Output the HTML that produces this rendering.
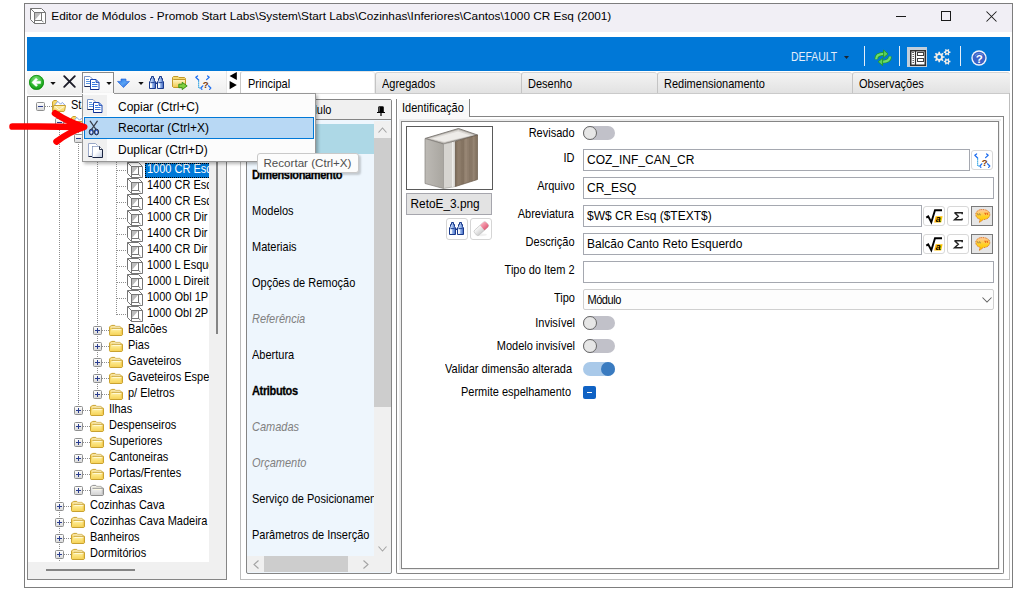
<!DOCTYPE html>
<html><head><meta charset="utf-8">
<style>
*{box-sizing:border-box;margin:0;padding:0}
html,body{width:1016px;height:592px;overflow:hidden;background:#fff;font-family:"Liberation Sans",sans-serif;font-size:11px;color:#000}
.a{position:absolute}
.t{position:absolute;white-space:pre;line-height:1}
.ms{transform:scaleY(1.1);transform-origin:0 9.31px}
svg{overflow:visible}
</style></head><body>

<div class="a" style="left:24px;top:3px;width:989px;height:585px;border:1px solid #7d7d7d;background:#fff"></div>
<div class="a" style="left:25px;top:4px;width:987px;height:28px;background:#f1eff5"></div>
<svg class="a" style="left:30px;top:8px;" width="16" height="16" viewBox="0 0 16 16"><path d="M0.5 0.5H11.5L15.5 4.5V15.5H4.5L0.5 11.5Z" fill="#fff" stroke="#767676"/><path d="M0.5 0.5L4.5 4.5H15.5M4.5 4.5V15.5" stroke="#767676" fill="none"/><rect x="4.5" y="4.5" width="7" height="8" fill="#fff" stroke="#767676"/><path d="M5 5H11L5 12Z" fill="#bcbcbc"/><path d="M11.5 12.5L13.5 14" stroke="#767676"/></svg>
<div class="t" style="left:51.3px;top:11.01px;font-size:11.8px;color:#000;font-weight:400;font-style:normal;">Editor de Módulos - Promob Start Labs\System\Start Labs\Cozinhas\Inferiores\Cantos\1000 CR Esq (2001)</div>
<div class="a" style="left:896px;top:16px;width:10px;height:1px;background:#1a1a1a"></div>
<div class="a" style="left:941px;top:11px;width:10px;height:10px;border:1px solid #1a1a1a"></div>
<svg class="a" style="left:986px;top:11px;" width="11" height="11" viewBox="0 0 11 11"><path d="M0.5 0.5L10.5 10.5M10.5 0.5L0.5 10.5" stroke="#1a1a1a" stroke-width="1.05"/></svg>
<div class="a" style="left:27px;top:37px;width:983px;height:34px;background:#0078d7"></div>
<div class="t" style="left:791px;top:50.8px;font-size:12px;color:#e6effa;transform:scaleX(0.866);transform-origin:0 0">DEFAULT</div>
<svg class="a" style="left:844px;top:56px;" width="5" height="3" viewBox="0 0 5 3"><path d="M0 0H5L2.5 3Z" fill="#1b2430"/></svg>
<div class="a" style="left:864px;top:46px;width:1px;height:20px;background:#e4eef9"></div>
<div class="a" style="left:899px;top:46px;width:1px;height:20px;background:#e4eef9"></div>
<div class="a" style="left:960px;top:46px;width:1px;height:20px;background:#e4eef9"></div>
<svg class="a" style="left:874px;top:49px;" width="18" height="17" viewBox="0 0 18 17"><g fill="none" stroke-linecap="butt">
<path d="M2.2 10.2C2.2 6.8 5 4.9 10 4.9" stroke="#249a24" stroke-width="3.6"/>
<path d="M2.2 10.2C2.2 6.8 5 4.9 10 4.9" stroke="#6fdc6f" stroke-width="2.2"/>
<path d="M16 7.6C16 11 13.2 12.8 8.2 12.8" stroke="#249a24" stroke-width="3.6"/>
<path d="M16 7.6C16 11 13.2 12.8 8.2 12.8" stroke="#6fdc6f" stroke-width="2.2"/>
</g>
<path d="M9.6 1L14 4.9L9.6 8.7Z" fill="#5cd05c" stroke="#249a24" stroke-width="0.9" stroke-linejoin="round"/>
<path d="M8.6 9.2L4.2 12.8L8.6 16.6Z" fill="#5cd05c" stroke="#249a24" stroke-width="0.9" stroke-linejoin="round"/></svg>
<div class="a" style="left:907px;top:47px;width:20px;height:20px;background:#c3cfdb"></div>
<svg class="a" style="left:910px;top:50px;" width="16" height="16" viewBox="0 0 16 16"><rect x="0.75" y="0.75" width="14.5" height="14.5" fill="#fff" stroke="#303030" stroke-width="1.5"/>
<path d="M5.5 0.75V15.25" stroke="#303030" stroke-width="1.2"/>
<rect x="7.5" y="2.5" width="6" height="3" fill="#fff" stroke="#404040"/>
<rect x="7.5" y="8.5" width="6" height="3" fill="#fff" stroke="#404040"/>
<path d="M2 2.5H4M2.5 4.5H4M2.5 6.5H4M2.5 8.5H4M2.5 10.5H4M2.5 12.5H4" stroke="#505050" stroke-width="0.9"/></svg>
<svg class="a" style="left:932px;top:49px;" width="20" height="18" viewBox="0 0 20 18"><path d="M11.00 7.13 L12.53 7.16 L12.53 8.84 L11.00 8.87 L10.51 10.07 L11.57 11.17 L10.37 12.37 L9.27 11.31 L8.07 11.80 L8.04 13.33 L6.36 13.33 L6.33 11.80 L5.13 11.31 L4.03 12.37 L2.83 11.17 L3.89 10.07 L3.40 8.87 L1.87 8.84 L1.87 7.16 L3.40 7.13 L3.89 5.93 L2.83 4.83 L4.03 3.63 L5.13 4.69 L6.33 4.20 L6.36 2.67 L8.04 2.67 L8.07 4.20 L9.27 4.69 L10.37 3.63 L11.57 4.83 L10.51 5.93ZM9.10 8.00A1.9 1.9 0 1 0 5.30 8.00A1.9 1.9 0 1 0 9.10 8.00Z" fill="#f3eee8" fill-rule="evenodd"/><path d="M17.39 2.49 L18.43 2.49 L18.43 3.91 L17.39 3.91 L16.86 4.83 L17.38 5.73 L16.15 6.43 L15.63 5.54 L14.57 5.54 L14.05 6.43 L12.82 5.73 L13.34 4.83 L12.81 3.91 L11.77 3.91 L11.77 2.49 L12.81 2.49 L13.34 1.57 L12.82 0.67 L14.05 -0.03 L14.57 0.86 L15.63 0.86 L16.15 -0.03 L17.38 0.67 L16.86 1.57ZM16.10 3.20A1.0 1.0 0 1 0 14.10 3.20A1.0 1.0 0 1 0 16.10 3.20Z" fill="#f3eee8" fill-rule="evenodd"/><path d="M17.39 11.79 L18.43 11.79 L18.43 13.21 L17.39 13.21 L16.86 14.13 L17.38 15.03 L16.15 15.73 L15.63 14.84 L14.57 14.84 L14.05 15.73 L12.82 15.03 L13.34 14.13 L12.81 13.21 L11.77 13.21 L11.77 11.79 L12.81 11.79 L13.34 10.87 L12.82 9.97 L14.05 9.27 L14.57 10.16 L15.63 10.16 L16.15 9.27 L17.38 9.97 L16.86 10.87ZM16.10 12.50A1.0 1.0 0 1 0 14.10 12.50A1.0 1.0 0 1 0 16.10 12.50Z" fill="#f3eee8" fill-rule="evenodd"/></svg>
<svg class="a" style="left:971px;top:50px;" width="17" height="17" viewBox="0 0 17 17"><circle cx="8" cy="8" r="7.7" fill="#f2f5fa"/>
<circle cx="8" cy="8" r="6.3" fill="#3a62c8"/>
<path d="M4.2 6.2A4.2 3 0 0 1 12 5" fill="none" stroke="#6a8ee0" stroke-width="1"/>
<text x="8.2" y="12.6" font-family="Liberation Sans" font-weight="700" font-size="11.5" fill="#fff" text-anchor="middle">?</text></svg>
<div class="a" style="left:27px;top:71px;width:200px;height:24px;background:linear-gradient(#fcfcfc,#eeeeee);border-bottom-left-radius:3px;border-right:1px solid #e6e6e6"></div>
<svg class="a" style="left:29px;top:75px;" width="16" height="16" viewBox="0 0 16 16"><defs><radialGradient id="gg" cx="0.45" cy="0.3" r="0.75"><stop offset="0" stop-color="#7ee07a"/><stop offset="0.6" stop-color="#2cb62c"/><stop offset="1" stop-color="#109410"/></radialGradient></defs>
<circle cx="7.5" cy="7.4" r="7.4" fill="url(#gg)"/>
<circle cx="7.5" cy="7.4" r="7" fill="none" stroke="#0c8a0c" stroke-width="0.8"/>
<path d="M2.9 7.4L7 3.3L8.6 4.6L6.9 6.2H11.6V8.6H6.9L8.6 10.2L7 11.5Z" fill="#fff" stroke="#fff" stroke-width="0.5" stroke-linejoin="round"/></svg>
<svg class="a" style="left:50px;top:82px;" width="6" height="3" viewBox="0 0 6 3"><path d="M0.3 0H5.7L3 3Z" fill="#111"/></svg>
<svg class="a" style="left:63px;top:75px;" width="13" height="13" viewBox="0 0 13 13"><path d="M1.2 1.2L11.8 11.8M11.8 1.2L1.2 11.8" stroke="#1c1c28" stroke-width="1.9" stroke-linecap="round"/></svg>
<div class="a" style="left:82px;top:72px;width:32px;height:23px;border:1px solid #8a8a8a;border-bottom:none;background:linear-gradient(#fdfdfd,#f6f6f6)"></div>
<svg class="a" style="left:84px;top:76px;" width="16" height="14" viewBox="0 0 16 14"><path d="M0.5 0.5H6L8.5 3V10.5H0.5Z" fill="#fff" stroke="#7b93c4"/>
<path d="M0.5 10.5H8.5" stroke="#1d2a55"/>
<path d="M2 3.5H5M2 5.5H6.5M2 7.5H6.5" stroke="#5a96e0"/>
<path d="M6.5 3.5H12L15 6.5V13.5H6.5Z" fill="#fff" stroke="#1a46b0"/>
<path d="M12 3.5V6.5H15" fill="#7ea6f0" stroke="#1a46b0" stroke-width="0.8"/>
<path d="M8 6.5H11M8 8.5H13.5M8 10.5H13.5" stroke="#3a7ae0"/>
<path d="M6.5 13.5H15" stroke="#0e2a8a"/></svg>
<svg class="a" style="left:106px;top:82px;" width="6" height="3" viewBox="0 0 6 3"><path d="M0.3 0H5.7L3 3Z" fill="#111"/></svg>
<svg class="a" style="left:117px;top:78px;" width="13" height="10" viewBox="0 0 13 10"><defs><linearGradient id="bag" x1="0" y1="0" x2="1" y2="1"><stop offset="0" stop-color="#1c6ee8"/><stop offset="0.5" stop-color="#5aa4f4"/><stop offset="1" stop-color="#1450d0"/></linearGradient></defs>
<path d="M4 1H9V3.4H12.5L6.5 9.6L0.5 3.4H4Z" fill="url(#bag)" stroke="#1a5ad8" stroke-width="0.6" stroke-linejoin="round"/></svg>
<svg class="a" style="left:138px;top:82px;" width="6" height="3" viewBox="0 0 6 3"><path d="M0.3 0H5.7L3 3Z" fill="#111"/></svg>
<svg class="a" style="left:149px;top:76px;" width="15" height="13" viewBox="0 0 15 13"><defs><linearGradient id="bng" x1="0" y1="0" x2="1" y2="0"><stop offset="0" stop-color="#f4f8ff"/><stop offset="0.5" stop-color="#9ab8ea"/><stop offset="1" stop-color="#3a62c0"/></linearGradient></defs>
<g stroke="#1a3a8c" stroke-width="1" stroke-linejoin="round" fill="url(#bng)">
<path d="M2.5 0.5H4.5V2.5H5.5V4.5L6.5 6V12.5H0.5V6L1.5 4.5V2.5H2.5Z"/>
<path d="M10.5 0.5H12.5V2.5H13.5V4.5L14.5 6V12.5H8.5V6L9.5 4.5V2.5H10.5Z"/>
</g>
<path d="M6.5 6.5H8.5V8H6.5Z" fill="#1a3a8c"/>
<path d="M1.5 6.6H5.5M9.5 6.6H13.5" stroke="#1a3a8c" stroke-width="0.9"/>
<path d="M1.2 7.5H2.8V11.8H1.2ZM9.2 7.5H10.8V11.8H9.2Z" fill="#fff"/></svg>
<svg class="a" style="left:172px;top:76px;" width="16" height="15" viewBox="0 0 16 15"><defs><linearGradient id="fag" x1="0" y1="0" x2="0" y2="1"><stop offset="0" stop-color="#fff6c8"/><stop offset="1" stop-color="#f0c84a"/></linearGradient></defs>
<path d="M0.5 1.5L1.5 0.5H6L7 1.5H12.5L13.5 2.5V10.5H0.5Z" fill="#f5d870" stroke="#c29a2a"/>
<path d="M0.5 4L1.5 3.5H13.5V10.5L12.5 11.5H1.5L0.5 10.5Z" fill="url(#fag)" stroke="#c29a2a"/>
<path d="M6.8 8.2H10.2V6.3L15.2 9.9L10.2 13.6V11.7H6.8Z" fill="#7fd040" stroke="#2f8a12" stroke-width="0.9" stroke-linejoin="round"/></svg>
<svg class="a" style="left:195px;top:75px;" width="17" height="16" viewBox="0 0 17 16"><g stroke="#1e6ef0" stroke-width="1.25" fill="none" stroke-linecap="round" stroke-linejoin="round">
<path d="M2.6 0.9L0.8 2.2L3.6 5"/><path d="M12.6 0.9L14.2 2.2L11.6 4.6"/>
<path d="M7.8 10.8L5.9 13L6.9 14.3"/><path d="M13.5 10.8L15.8 13L14.6 14.3"/>
</g>
<path d="M3.6 5.6V13H5.8" stroke="#1a9ae0" stroke-width="1.2" fill="none" stroke-dasharray="1.1 0.9"/>
<text x="10.6" y="12.6" font-family="Liberation Sans" font-weight="700" font-size="9.6" fill="#7a3c10" text-anchor="middle">?</text></svg>
<svg class="a" style="left:229px;top:72px;" width="8" height="18" viewBox="0 0 8 18"><path d="M7.8 0.1V8L0.6 4.1Z" fill="#000"/><path d="M0.6 9.1V17.2L7.8 13.1Z" fill="#000"/></svg>
<div class="a" style="left:240px;top:71px;width:135px;height:23px;background:#fff;border-left:1px solid #c8c8c8;border-top:1px solid #e4e4e4;border-right:1px solid #ececec;border-top-left-radius:3px;border-top-right-radius:3px"></div>
<div class="a" style="left:240px;top:93px;width:770px;height:1px;background:#d4d4d4"></div>
<div class="t ms" style="left:248px;top:78.69px;font-size:11px;color:#000;font-weight:400;font-style:normal;">Principal</div>
<div class="a" style="left:375px;top:72px;width:146px;height:21px;background:linear-gradient(#f3f3f3,#e2e2e2);border-left:1px solid #c4c4c4;border-top:1px solid #d4d4d4;border-top-left-radius:3px;border-top-right-radius:3px"></div>
<div class="t ms" style="left:382px;top:78.69px;font-size:11px;color:#000;font-weight:400;font-style:normal;">Agregados</div>
<div class="a" style="left:521px;top:72px;width:136px;height:21px;background:linear-gradient(#f3f3f3,#e2e2e2);border-left:1px solid #c4c4c4;border-top:1px solid #d4d4d4;border-top-left-radius:3px;border-top-right-radius:3px"></div>
<div class="t ms" style="left:528px;top:78.69px;font-size:11px;color:#000;font-weight:400;font-style:normal;">Desenho</div>
<div class="a" style="left:657px;top:72px;width:195px;height:21px;background:linear-gradient(#f3f3f3,#e2e2e2);border-left:1px solid #c4c4c4;border-top:1px solid #d4d4d4;border-top-left-radius:3px;border-top-right-radius:3px"></div>
<div class="t ms" style="left:664px;top:78.69px;font-size:11px;color:#000;font-weight:400;font-style:normal;">Redimensionamento</div>
<div class="a" style="left:852px;top:72px;width:158px;height:21px;background:linear-gradient(#f3f3f3,#e2e2e2);border-left:1px solid #c4c4c4;border-top:1px solid #d4d4d4;border-top-left-radius:3px;border-top-right-radius:3px"></div>
<div class="t ms" style="left:859px;top:78.69px;font-size:11px;color:#000;font-weight:400;font-style:normal;">Observações</div>
<div class="a" style="left:375px;top:93px;width:635px;height:1px;background:#cacaca"></div>
<div class="a" style="left:27px;top:96px;width:200px;height:484px;border:1px solid #858585;background:#fff"></div>
<div class="a" style="left:209px;top:97px;width:17px;height:465px;background:#f0f0f0"></div>
<div class="a" style="left:28px;top:562px;width:198px;height:17px;background:#f0f0f0"></div>
<div class="a" style="left:216px;top:97px;width:2px;height:237px;background:#858585"></div>
<div class="a" style="left:46px;top:569px;width:89px;height:2px;background:#858585"></div>
<div class="a" style="left:28px;top:97px;width:181px;height:465px;overflow:hidden">
<div class="a" style="left:31px;top:13px;width:1px;height:456px;background:repeating-linear-gradient(#8e8e8e 0 1px,transparent 1px 2px)"></div>
<div class="a" style="left:50px;top:29px;width:1px;height:285px;background:repeating-linear-gradient(#8e8e8e 0 1px,transparent 1px 2px)"></div>
<div class="a" style="left:69px;top:45px;width:1px;height:253px;background:repeating-linear-gradient(#8e8e8e 0 1px,transparent 1px 2px)"></div>
<div class="a" style="left:88px;top:61px;width:1px;height:157px;background:repeating-linear-gradient(#8e8e8e 0 1px,transparent 1px 2px)"></div>
<div class="a" style="left:17px;top:9px;width:7px;height:1px;background:repeating-linear-gradient(90deg,#8e8e8e 0 1px,transparent 1px 2px)"></div>
<svg class="a" style="left:8px;top:5px" width="9" height="9"><defs><linearGradient id="bxg" x1="0" y1="0" x2="0" y2="1"><stop offset="0" stop-color="#fff"/><stop offset="1" stop-color="#d8d8d8"/></linearGradient></defs><rect x="0.5" y="0.5" width="8" height="8" rx="1" fill="url(#bxg)" stroke="#8e8f8f"/><path d="M2 4.5H7" stroke="#2a3d8f"/></svg>
<svg class="a" style="left:24px;top:3px" width="14" height="13"><path d="M0.5 11V2L1.8 0.5H4.5L5.5 1.5" fill="#f7d86a" stroke="#c9a230"/><path d="M2.2 5.6L5.8 1.4L8.6 4.2L10.3 2.4L13.2 5.4Z" fill="#fff" stroke="#6f8fdc" stroke-width="0.8" stroke-linejoin="round"/><path d="M1.6 5.5H13.5L12.6 10.8L11.8 11.5H1.2L0.6 10.8Z" fill="url(#ofg)" stroke="#c9a230"/><defs><linearGradient id="ofg" x1="0" y1="0" x2="0" y2="1"><stop offset="0" stop-color="#fff3b8"/><stop offset="1" stop-color="#f4d25a"/></linearGradient></defs><path d="M3.2 6.6L7.2 9.8L11.4 6.6" fill="none" stroke="#fffbe8" stroke-width="0.9"/></svg>
<div class="t ms" style="left:43px;top:2.5999999999999943px;font-size:11px">Start Labs</div>
<div class="a" style="left:36px;top:25px;width:7px;height:1px;background:repeating-linear-gradient(90deg,#8e8e8e 0 1px,transparent 1px 2px)"></div>
<svg class="a" style="left:27px;top:21px" width="9" height="9"><defs><linearGradient id="bxg" x1="0" y1="0" x2="0" y2="1"><stop offset="0" stop-color="#fff"/><stop offset="1" stop-color="#d8d8d8"/></linearGradient></defs><rect x="0.5" y="0.5" width="8" height="8" rx="1" fill="url(#bxg)" stroke="#8e8f8f"/><path d="M2 4.5H7" stroke="#2a3d8f"/></svg>
<svg class="a" style="left:43px;top:19px" width="14" height="13"><path d="M0.5 11V2L1.8 0.5H4.5L5.5 1.5" fill="#f7d86a" stroke="#c9a230"/><path d="M2.2 5.6L5.8 1.4L8.6 4.2L10.3 2.4L13.2 5.4Z" fill="#fff" stroke="#6f8fdc" stroke-width="0.8" stroke-linejoin="round"/><path d="M1.6 5.5H13.5L12.6 10.8L11.8 11.5H1.2L0.6 10.8Z" fill="url(#ofg)" stroke="#c9a230"/><defs><linearGradient id="ofg" x1="0" y1="0" x2="0" y2="1"><stop offset="0" stop-color="#fff3b8"/><stop offset="1" stop-color="#f4d25a"/></linearGradient></defs><path d="M3.2 6.6L7.2 9.8L11.4 6.6" fill="none" stroke="#fffbe8" stroke-width="0.9"/></svg>
<div class="t ms" style="left:62px;top:18.599999999999994px;font-size:11px">Cozinhas</div>
<div class="a" style="left:55px;top:41px;width:7px;height:1px;background:repeating-linear-gradient(90deg,#8e8e8e 0 1px,transparent 1px 2px)"></div>
<svg class="a" style="left:46px;top:37px" width="9" height="9"><defs><linearGradient id="bxg" x1="0" y1="0" x2="0" y2="1"><stop offset="0" stop-color="#fff"/><stop offset="1" stop-color="#d8d8d8"/></linearGradient></defs><rect x="0.5" y="0.5" width="8" height="8" rx="1" fill="url(#bxg)" stroke="#8e8f8f"/><path d="M2 4.5H7" stroke="#2a3d8f"/></svg>
<svg class="a" style="left:62px;top:35px" width="14" height="13"><path d="M0.5 11V2L1.8 0.5H4.5L5.5 1.5" fill="#f7d86a" stroke="#c9a230"/><path d="M2.2 5.6L5.8 1.4L8.6 4.2L10.3 2.4L13.2 5.4Z" fill="#fff" stroke="#6f8fdc" stroke-width="0.8" stroke-linejoin="round"/><path d="M1.6 5.5H13.5L12.6 10.8L11.8 11.5H1.2L0.6 10.8Z" fill="url(#ofg)" stroke="#c9a230"/><defs><linearGradient id="ofg" x1="0" y1="0" x2="0" y2="1"><stop offset="0" stop-color="#fff3b8"/><stop offset="1" stop-color="#f4d25a"/></linearGradient></defs><path d="M3.2 6.6L7.2 9.8L11.4 6.6" fill="none" stroke="#fffbe8" stroke-width="0.9"/></svg>
<div class="t ms" style="left:81px;top:34.599999999999994px;font-size:11px">Inferiores</div>
<div class="a" style="left:74px;top:57px;width:7px;height:1px;background:repeating-linear-gradient(90deg,#8e8e8e 0 1px,transparent 1px 2px)"></div>
<svg class="a" style="left:65px;top:53px" width="9" height="9"><defs><linearGradient id="bxg" x1="0" y1="0" x2="0" y2="1"><stop offset="0" stop-color="#fff"/><stop offset="1" stop-color="#d8d8d8"/></linearGradient></defs><rect x="0.5" y="0.5" width="8" height="8" rx="1" fill="url(#bxg)" stroke="#8e8f8f"/><path d="M2 4.5H7" stroke="#2a3d8f"/></svg>
<svg class="a" style="left:81px;top:51px" width="14" height="13"><path d="M0.5 11V2L1.8 0.5H4.5L5.5 1.5" fill="#f7d86a" stroke="#c9a230"/><path d="M2.2 5.6L5.8 1.4L8.6 4.2L10.3 2.4L13.2 5.4Z" fill="#fff" stroke="#6f8fdc" stroke-width="0.8" stroke-linejoin="round"/><path d="M1.6 5.5H13.5L12.6 10.8L11.8 11.5H1.2L0.6 10.8Z" fill="url(#ofg)" stroke="#c9a230"/><defs><linearGradient id="ofg" x1="0" y1="0" x2="0" y2="1"><stop offset="0" stop-color="#fff3b8"/><stop offset="1" stop-color="#f4d25a"/></linearGradient></defs><path d="M3.2 6.6L7.2 9.8L11.4 6.6" fill="none" stroke="#fffbe8" stroke-width="0.9"/></svg>
<div class="t ms" style="left:100px;top:50.599999999999994px;font-size:11px">Cantos</div>
<div class="a" style="left:89px;top:73px;width:10px;height:1px;background:repeating-linear-gradient(90deg,#8e8e8e 0 1px,transparent 1px 2px)"></div>
<svg class="a" style="left:99px;top:65px;" width="16" height="16" viewBox="0 0 16 16"><path d="M0.5 0.5H11.5L15.5 4.5V15.5H4.5L0.5 11.5Z" fill="#fff" stroke="#767676"/><path d="M0.5 0.5L4.5 4.5H15.5M4.5 4.5V15.5" stroke="#767676" fill="none"/><rect x="4.5" y="4.5" width="7" height="8" fill="#fff" stroke="#767676"/><path d="M5 5H11L5 12Z" fill="#bcbcbc"/><path d="M11.5 12.5L13.5 14" stroke="#767676"/></svg>
<div class="a" style="left:117px;top:66px;width:70px;height:15px;background:#0078d7;border:1px dotted #000"></div>
<div class="t ms" style="left:119px;top:66.6px;font-size:11px;color:#fff">1000 CR Esq</div>
<div class="a" style="left:89px;top:89px;width:10px;height:1px;background:repeating-linear-gradient(90deg,#8e8e8e 0 1px,transparent 1px 2px)"></div>
<svg class="a" style="left:99px;top:81px;" width="16" height="16" viewBox="0 0 16 16"><path d="M0.5 0.5H11.5L15.5 4.5V15.5H4.5L0.5 11.5Z" fill="#fff" stroke="#767676"/><path d="M0.5 0.5L4.5 4.5H15.5M4.5 4.5V15.5" stroke="#767676" fill="none"/><rect x="4.5" y="4.5" width="7" height="8" fill="#fff" stroke="#767676"/><path d="M5 5H11L5 12Z" fill="#bcbcbc"/><path d="M11.5 12.5L13.5 14" stroke="#767676"/></svg>
<div class="t ms" style="left:119px;top:82.6px;font-size:11px">1400 CR Esq</div>
<div class="a" style="left:89px;top:105px;width:10px;height:1px;background:repeating-linear-gradient(90deg,#8e8e8e 0 1px,transparent 1px 2px)"></div>
<svg class="a" style="left:99px;top:97px;" width="16" height="16" viewBox="0 0 16 16"><path d="M0.5 0.5H11.5L15.5 4.5V15.5H4.5L0.5 11.5Z" fill="#fff" stroke="#767676"/><path d="M0.5 0.5L4.5 4.5H15.5M4.5 4.5V15.5" stroke="#767676" fill="none"/><rect x="4.5" y="4.5" width="7" height="8" fill="#fff" stroke="#767676"/><path d="M5 5H11L5 12Z" fill="#bcbcbc"/><path d="M11.5 12.5L13.5 14" stroke="#767676"/></svg>
<div class="t ms" style="left:119px;top:98.6px;font-size:11px">1400 CR Esq</div>
<div class="a" style="left:89px;top:121px;width:10px;height:1px;background:repeating-linear-gradient(90deg,#8e8e8e 0 1px,transparent 1px 2px)"></div>
<svg class="a" style="left:99px;top:113px;" width="16" height="16" viewBox="0 0 16 16"><path d="M0.5 0.5H11.5L15.5 4.5V15.5H4.5L0.5 11.5Z" fill="#fff" stroke="#767676"/><path d="M0.5 0.5L4.5 4.5H15.5M4.5 4.5V15.5" stroke="#767676" fill="none"/><rect x="4.5" y="4.5" width="7" height="8" fill="#fff" stroke="#767676"/><path d="M5 5H11L5 12Z" fill="#bcbcbc"/><path d="M11.5 12.5L13.5 14" stroke="#767676"/></svg>
<div class="t ms" style="left:119px;top:114.6px;font-size:11px">1000 CR Dir</div>
<div class="a" style="left:89px;top:137px;width:10px;height:1px;background:repeating-linear-gradient(90deg,#8e8e8e 0 1px,transparent 1px 2px)"></div>
<svg class="a" style="left:99px;top:129px;" width="16" height="16" viewBox="0 0 16 16"><path d="M0.5 0.5H11.5L15.5 4.5V15.5H4.5L0.5 11.5Z" fill="#fff" stroke="#767676"/><path d="M0.5 0.5L4.5 4.5H15.5M4.5 4.5V15.5" stroke="#767676" fill="none"/><rect x="4.5" y="4.5" width="7" height="8" fill="#fff" stroke="#767676"/><path d="M5 5H11L5 12Z" fill="#bcbcbc"/><path d="M11.5 12.5L13.5 14" stroke="#767676"/></svg>
<div class="t ms" style="left:119px;top:130.6px;font-size:11px">1400 CR Dir</div>
<div class="a" style="left:89px;top:153px;width:10px;height:1px;background:repeating-linear-gradient(90deg,#8e8e8e 0 1px,transparent 1px 2px)"></div>
<svg class="a" style="left:99px;top:145px;" width="16" height="16" viewBox="0 0 16 16"><path d="M0.5 0.5H11.5L15.5 4.5V15.5H4.5L0.5 11.5Z" fill="#fff" stroke="#767676"/><path d="M0.5 0.5L4.5 4.5H15.5M4.5 4.5V15.5" stroke="#767676" fill="none"/><rect x="4.5" y="4.5" width="7" height="8" fill="#fff" stroke="#767676"/><path d="M5 5H11L5 12Z" fill="#bcbcbc"/><path d="M11.5 12.5L13.5 14" stroke="#767676"/></svg>
<div class="t ms" style="left:119px;top:146.6px;font-size:11px">1400 CR Dir</div>
<div class="a" style="left:89px;top:169px;width:10px;height:1px;background:repeating-linear-gradient(90deg,#8e8e8e 0 1px,transparent 1px 2px)"></div>
<svg class="a" style="left:99px;top:161px;" width="16" height="16" viewBox="0 0 16 16"><path d="M0.5 0.5H11.5L15.5 4.5V15.5H4.5L0.5 11.5Z" fill="#fff" stroke="#767676"/><path d="M0.5 0.5L4.5 4.5H15.5M4.5 4.5V15.5" stroke="#767676" fill="none"/><rect x="4.5" y="4.5" width="7" height="8" fill="#fff" stroke="#767676"/><path d="M5 5H11L5 12Z" fill="#bcbcbc"/><path d="M11.5 12.5L13.5 14" stroke="#767676"/></svg>
<div class="t ms" style="left:119px;top:162.60000000000002px;font-size:11px">1000 L Esquerdo</div>
<div class="a" style="left:89px;top:185px;width:10px;height:1px;background:repeating-linear-gradient(90deg,#8e8e8e 0 1px,transparent 1px 2px)"></div>
<svg class="a" style="left:99px;top:177px;" width="16" height="16" viewBox="0 0 16 16"><path d="M0.5 0.5H11.5L15.5 4.5V15.5H4.5L0.5 11.5Z" fill="#fff" stroke="#767676"/><path d="M0.5 0.5L4.5 4.5H15.5M4.5 4.5V15.5" stroke="#767676" fill="none"/><rect x="4.5" y="4.5" width="7" height="8" fill="#fff" stroke="#767676"/><path d="M5 5H11L5 12Z" fill="#bcbcbc"/><path d="M11.5 12.5L13.5 14" stroke="#767676"/></svg>
<div class="t ms" style="left:119px;top:178.60000000000002px;font-size:11px">1000 L Direito</div>
<div class="a" style="left:89px;top:201px;width:10px;height:1px;background:repeating-linear-gradient(90deg,#8e8e8e 0 1px,transparent 1px 2px)"></div>
<svg class="a" style="left:99px;top:193px;" width="16" height="16" viewBox="0 0 16 16"><path d="M0.5 0.5H11.5L15.5 4.5V15.5H4.5L0.5 11.5Z" fill="#fff" stroke="#767676"/><path d="M0.5 0.5L4.5 4.5H15.5M4.5 4.5V15.5" stroke="#767676" fill="none"/><rect x="4.5" y="4.5" width="7" height="8" fill="#fff" stroke="#767676"/><path d="M5 5H11L5 12Z" fill="#bcbcbc"/><path d="M11.5 12.5L13.5 14" stroke="#767676"/></svg>
<div class="t ms" style="left:119px;top:194.60000000000002px;font-size:11px">1000 Obl 1P</div>
<div class="a" style="left:89px;top:217px;width:10px;height:1px;background:repeating-linear-gradient(90deg,#8e8e8e 0 1px,transparent 1px 2px)"></div>
<svg class="a" style="left:99px;top:209px;" width="16" height="16" viewBox="0 0 16 16"><path d="M0.5 0.5H11.5L15.5 4.5V15.5H4.5L0.5 11.5Z" fill="#fff" stroke="#767676"/><path d="M0.5 0.5L4.5 4.5H15.5M4.5 4.5V15.5" stroke="#767676" fill="none"/><rect x="4.5" y="4.5" width="7" height="8" fill="#fff" stroke="#767676"/><path d="M5 5H11L5 12Z" fill="#bcbcbc"/><path d="M11.5 12.5L13.5 14" stroke="#767676"/></svg>
<div class="t ms" style="left:119px;top:210.60000000000002px;font-size:11px">1000 Obl 2P</div>
<div class="a" style="left:74px;top:233px;width:7px;height:1px;background:repeating-linear-gradient(90deg,#8e8e8e 0 1px,transparent 1px 2px)"></div>
<svg class="a" style="left:65px;top:229px" width="9" height="9"><defs><linearGradient id="bxg" x1="0" y1="0" x2="0" y2="1"><stop offset="0" stop-color="#fff"/><stop offset="1" stop-color="#d8d8d8"/></linearGradient></defs><rect x="0.5" y="0.5" width="8" height="8" rx="1" fill="url(#bxg)" stroke="#8e8f8f"/><path d="M2 4.5H7" stroke="#2a3d8f"/><path d="M4.5 2V7" stroke="#2a3d8f"/></svg>
<svg class="a" style="left:81px;top:228px" width="14" height="12"><defs><linearGradient id="fdg" x1="0" y1="0" x2="0" y2="1"><stop offset="0" stop-color="#fff3b0"/><stop offset="0.5" stop-color="#fbe27a"/><stop offset="1" stop-color="#f5d054"/></linearGradient><linearGradient id="fdb" x1="0" y1="0" x2="1" y2="0"><stop offset="0" stop-color="#f4cf5a"/><stop offset="1" stop-color="#fff0b0"/></linearGradient></defs><path d="M0.5 9.8V2.1L1.7 0.8H2.2L2.7 0.4H5.8L6.5 1.4H11L12 2.4V9.8Z" fill="url(#fdb)" stroke="#c9a230"/>
<path d="M1.6 2.1H11" stroke="#fffbe6" stroke-width="0.9"/>
<path d="M2.5 3.3H13.5V9.8L12.8 10.5H1.2L0.6 9.8" fill="url(#fdg)" stroke="#c9a230"/>
<path d="M3.5 4.4H12.6" stroke="#fffbe0" stroke-width="0.9"/>
<path d="M12.3 4.2V9.4" stroke="#f0c040" stroke-width="0.8"/></svg>
<div class="t ms" style="left:100px;top:226.60000000000002px;font-size:11px">Balcões</div>
<div class="a" style="left:74px;top:249px;width:7px;height:1px;background:repeating-linear-gradient(90deg,#8e8e8e 0 1px,transparent 1px 2px)"></div>
<svg class="a" style="left:65px;top:245px" width="9" height="9"><defs><linearGradient id="bxg" x1="0" y1="0" x2="0" y2="1"><stop offset="0" stop-color="#fff"/><stop offset="1" stop-color="#d8d8d8"/></linearGradient></defs><rect x="0.5" y="0.5" width="8" height="8" rx="1" fill="url(#bxg)" stroke="#8e8f8f"/><path d="M2 4.5H7" stroke="#2a3d8f"/><path d="M4.5 2V7" stroke="#2a3d8f"/></svg>
<svg class="a" style="left:81px;top:244px" width="14" height="12"><defs><linearGradient id="fdg" x1="0" y1="0" x2="0" y2="1"><stop offset="0" stop-color="#fff3b0"/><stop offset="0.5" stop-color="#fbe27a"/><stop offset="1" stop-color="#f5d054"/></linearGradient><linearGradient id="fdb" x1="0" y1="0" x2="1" y2="0"><stop offset="0" stop-color="#f4cf5a"/><stop offset="1" stop-color="#fff0b0"/></linearGradient></defs><path d="M0.5 9.8V2.1L1.7 0.8H2.2L2.7 0.4H5.8L6.5 1.4H11L12 2.4V9.8Z" fill="url(#fdb)" stroke="#c9a230"/>
<path d="M1.6 2.1H11" stroke="#fffbe6" stroke-width="0.9"/>
<path d="M2.5 3.3H13.5V9.8L12.8 10.5H1.2L0.6 9.8" fill="url(#fdg)" stroke="#c9a230"/>
<path d="M3.5 4.4H12.6" stroke="#fffbe0" stroke-width="0.9"/>
<path d="M12.3 4.2V9.4" stroke="#f0c040" stroke-width="0.8"/></svg>
<div class="t ms" style="left:100px;top:242.60000000000002px;font-size:11px">Pias</div>
<div class="a" style="left:74px;top:265px;width:7px;height:1px;background:repeating-linear-gradient(90deg,#8e8e8e 0 1px,transparent 1px 2px)"></div>
<svg class="a" style="left:65px;top:261px" width="9" height="9"><defs><linearGradient id="bxg" x1="0" y1="0" x2="0" y2="1"><stop offset="0" stop-color="#fff"/><stop offset="1" stop-color="#d8d8d8"/></linearGradient></defs><rect x="0.5" y="0.5" width="8" height="8" rx="1" fill="url(#bxg)" stroke="#8e8f8f"/><path d="M2 4.5H7" stroke="#2a3d8f"/><path d="M4.5 2V7" stroke="#2a3d8f"/></svg>
<svg class="a" style="left:81px;top:260px" width="14" height="12"><defs><linearGradient id="fdg" x1="0" y1="0" x2="0" y2="1"><stop offset="0" stop-color="#fff3b0"/><stop offset="0.5" stop-color="#fbe27a"/><stop offset="1" stop-color="#f5d054"/></linearGradient><linearGradient id="fdb" x1="0" y1="0" x2="1" y2="0"><stop offset="0" stop-color="#f4cf5a"/><stop offset="1" stop-color="#fff0b0"/></linearGradient></defs><path d="M0.5 9.8V2.1L1.7 0.8H2.2L2.7 0.4H5.8L6.5 1.4H11L12 2.4V9.8Z" fill="url(#fdb)" stroke="#c9a230"/>
<path d="M1.6 2.1H11" stroke="#fffbe6" stroke-width="0.9"/>
<path d="M2.5 3.3H13.5V9.8L12.8 10.5H1.2L0.6 9.8" fill="url(#fdg)" stroke="#c9a230"/>
<path d="M3.5 4.4H12.6" stroke="#fffbe0" stroke-width="0.9"/>
<path d="M12.3 4.2V9.4" stroke="#f0c040" stroke-width="0.8"/></svg>
<div class="t ms" style="left:100px;top:258.6px;font-size:11px">Gaveteiros</div>
<div class="a" style="left:74px;top:281px;width:7px;height:1px;background:repeating-linear-gradient(90deg,#8e8e8e 0 1px,transparent 1px 2px)"></div>
<svg class="a" style="left:65px;top:277px" width="9" height="9"><defs><linearGradient id="bxg" x1="0" y1="0" x2="0" y2="1"><stop offset="0" stop-color="#fff"/><stop offset="1" stop-color="#d8d8d8"/></linearGradient></defs><rect x="0.5" y="0.5" width="8" height="8" rx="1" fill="url(#bxg)" stroke="#8e8f8f"/><path d="M2 4.5H7" stroke="#2a3d8f"/><path d="M4.5 2V7" stroke="#2a3d8f"/></svg>
<svg class="a" style="left:81px;top:276px" width="14" height="12"><defs><linearGradient id="fdg" x1="0" y1="0" x2="0" y2="1"><stop offset="0" stop-color="#fff3b0"/><stop offset="0.5" stop-color="#fbe27a"/><stop offset="1" stop-color="#f5d054"/></linearGradient><linearGradient id="fdb" x1="0" y1="0" x2="1" y2="0"><stop offset="0" stop-color="#f4cf5a"/><stop offset="1" stop-color="#fff0b0"/></linearGradient></defs><path d="M0.5 9.8V2.1L1.7 0.8H2.2L2.7 0.4H5.8L6.5 1.4H11L12 2.4V9.8Z" fill="url(#fdb)" stroke="#c9a230"/>
<path d="M1.6 2.1H11" stroke="#fffbe6" stroke-width="0.9"/>
<path d="M2.5 3.3H13.5V9.8L12.8 10.5H1.2L0.6 9.8" fill="url(#fdg)" stroke="#c9a230"/>
<path d="M3.5 4.4H12.6" stroke="#fffbe0" stroke-width="0.9"/>
<path d="M12.3 4.2V9.4" stroke="#f0c040" stroke-width="0.8"/></svg>
<div class="t ms" style="left:100px;top:274.6px;font-size:11px">Gaveteiros Especiais</div>
<div class="a" style="left:74px;top:297px;width:7px;height:1px;background:repeating-linear-gradient(90deg,#8e8e8e 0 1px,transparent 1px 2px)"></div>
<svg class="a" style="left:65px;top:293px" width="9" height="9"><defs><linearGradient id="bxg" x1="0" y1="0" x2="0" y2="1"><stop offset="0" stop-color="#fff"/><stop offset="1" stop-color="#d8d8d8"/></linearGradient></defs><rect x="0.5" y="0.5" width="8" height="8" rx="1" fill="url(#bxg)" stroke="#8e8f8f"/><path d="M2 4.5H7" stroke="#2a3d8f"/><path d="M4.5 2V7" stroke="#2a3d8f"/></svg>
<svg class="a" style="left:81px;top:292px" width="14" height="12"><defs><linearGradient id="fdg" x1="0" y1="0" x2="0" y2="1"><stop offset="0" stop-color="#fff3b0"/><stop offset="0.5" stop-color="#fbe27a"/><stop offset="1" stop-color="#f5d054"/></linearGradient><linearGradient id="fdb" x1="0" y1="0" x2="1" y2="0"><stop offset="0" stop-color="#f4cf5a"/><stop offset="1" stop-color="#fff0b0"/></linearGradient></defs><path d="M0.5 9.8V2.1L1.7 0.8H2.2L2.7 0.4H5.8L6.5 1.4H11L12 2.4V9.8Z" fill="url(#fdb)" stroke="#c9a230"/>
<path d="M1.6 2.1H11" stroke="#fffbe6" stroke-width="0.9"/>
<path d="M2.5 3.3H13.5V9.8L12.8 10.5H1.2L0.6 9.8" fill="url(#fdg)" stroke="#c9a230"/>
<path d="M3.5 4.4H12.6" stroke="#fffbe0" stroke-width="0.9"/>
<path d="M12.3 4.2V9.4" stroke="#f0c040" stroke-width="0.8"/></svg>
<div class="t ms" style="left:100px;top:290.6px;font-size:11px">p/ Eletros</div>
<div class="a" style="left:55px;top:313px;width:7px;height:1px;background:repeating-linear-gradient(90deg,#8e8e8e 0 1px,transparent 1px 2px)"></div>
<svg class="a" style="left:46px;top:309px" width="9" height="9"><defs><linearGradient id="bxg" x1="0" y1="0" x2="0" y2="1"><stop offset="0" stop-color="#fff"/><stop offset="1" stop-color="#d8d8d8"/></linearGradient></defs><rect x="0.5" y="0.5" width="8" height="8" rx="1" fill="url(#bxg)" stroke="#8e8f8f"/><path d="M2 4.5H7" stroke="#2a3d8f"/><path d="M4.5 2V7" stroke="#2a3d8f"/></svg>
<svg class="a" style="left:62px;top:308px" width="14" height="12"><defs><linearGradient id="fdg" x1="0" y1="0" x2="0" y2="1"><stop offset="0" stop-color="#fff3b0"/><stop offset="0.5" stop-color="#fbe27a"/><stop offset="1" stop-color="#f5d054"/></linearGradient><linearGradient id="fdb" x1="0" y1="0" x2="1" y2="0"><stop offset="0" stop-color="#f4cf5a"/><stop offset="1" stop-color="#fff0b0"/></linearGradient></defs><path d="M0.5 9.8V2.1L1.7 0.8H2.2L2.7 0.4H5.8L6.5 1.4H11L12 2.4V9.8Z" fill="url(#fdb)" stroke="#c9a230"/>
<path d="M1.6 2.1H11" stroke="#fffbe6" stroke-width="0.9"/>
<path d="M2.5 3.3H13.5V9.8L12.8 10.5H1.2L0.6 9.8" fill="url(#fdg)" stroke="#c9a230"/>
<path d="M3.5 4.4H12.6" stroke="#fffbe0" stroke-width="0.9"/>
<path d="M12.3 4.2V9.4" stroke="#f0c040" stroke-width="0.8"/></svg>
<div class="t ms" style="left:81px;top:306.6px;font-size:11px">Ilhas</div>
<div class="a" style="left:55px;top:329px;width:7px;height:1px;background:repeating-linear-gradient(90deg,#8e8e8e 0 1px,transparent 1px 2px)"></div>
<svg class="a" style="left:46px;top:325px" width="9" height="9"><defs><linearGradient id="bxg" x1="0" y1="0" x2="0" y2="1"><stop offset="0" stop-color="#fff"/><stop offset="1" stop-color="#d8d8d8"/></linearGradient></defs><rect x="0.5" y="0.5" width="8" height="8" rx="1" fill="url(#bxg)" stroke="#8e8f8f"/><path d="M2 4.5H7" stroke="#2a3d8f"/><path d="M4.5 2V7" stroke="#2a3d8f"/></svg>
<svg class="a" style="left:62px;top:324px" width="14" height="12"><defs><linearGradient id="fdg" x1="0" y1="0" x2="0" y2="1"><stop offset="0" stop-color="#fff3b0"/><stop offset="0.5" stop-color="#fbe27a"/><stop offset="1" stop-color="#f5d054"/></linearGradient><linearGradient id="fdb" x1="0" y1="0" x2="1" y2="0"><stop offset="0" stop-color="#f4cf5a"/><stop offset="1" stop-color="#fff0b0"/></linearGradient></defs><path d="M0.5 9.8V2.1L1.7 0.8H2.2L2.7 0.4H5.8L6.5 1.4H11L12 2.4V9.8Z" fill="url(#fdb)" stroke="#c9a230"/>
<path d="M1.6 2.1H11" stroke="#fffbe6" stroke-width="0.9"/>
<path d="M2.5 3.3H13.5V9.8L12.8 10.5H1.2L0.6 9.8" fill="url(#fdg)" stroke="#c9a230"/>
<path d="M3.5 4.4H12.6" stroke="#fffbe0" stroke-width="0.9"/>
<path d="M12.3 4.2V9.4" stroke="#f0c040" stroke-width="0.8"/></svg>
<div class="t ms" style="left:81px;top:322.6px;font-size:11px">Despenseiros</div>
<div class="a" style="left:55px;top:345px;width:7px;height:1px;background:repeating-linear-gradient(90deg,#8e8e8e 0 1px,transparent 1px 2px)"></div>
<svg class="a" style="left:46px;top:341px" width="9" height="9"><defs><linearGradient id="bxg" x1="0" y1="0" x2="0" y2="1"><stop offset="0" stop-color="#fff"/><stop offset="1" stop-color="#d8d8d8"/></linearGradient></defs><rect x="0.5" y="0.5" width="8" height="8" rx="1" fill="url(#bxg)" stroke="#8e8f8f"/><path d="M2 4.5H7" stroke="#2a3d8f"/><path d="M4.5 2V7" stroke="#2a3d8f"/></svg>
<svg class="a" style="left:62px;top:340px" width="14" height="12"><defs><linearGradient id="fdg" x1="0" y1="0" x2="0" y2="1"><stop offset="0" stop-color="#fff3b0"/><stop offset="0.5" stop-color="#fbe27a"/><stop offset="1" stop-color="#f5d054"/></linearGradient><linearGradient id="fdb" x1="0" y1="0" x2="1" y2="0"><stop offset="0" stop-color="#f4cf5a"/><stop offset="1" stop-color="#fff0b0"/></linearGradient></defs><path d="M0.5 9.8V2.1L1.7 0.8H2.2L2.7 0.4H5.8L6.5 1.4H11L12 2.4V9.8Z" fill="url(#fdb)" stroke="#c9a230"/>
<path d="M1.6 2.1H11" stroke="#fffbe6" stroke-width="0.9"/>
<path d="M2.5 3.3H13.5V9.8L12.8 10.5H1.2L0.6 9.8" fill="url(#fdg)" stroke="#c9a230"/>
<path d="M3.5 4.4H12.6" stroke="#fffbe0" stroke-width="0.9"/>
<path d="M12.3 4.2V9.4" stroke="#f0c040" stroke-width="0.8"/></svg>
<div class="t ms" style="left:81px;top:338.6px;font-size:11px">Superiores</div>
<div class="a" style="left:55px;top:361px;width:7px;height:1px;background:repeating-linear-gradient(90deg,#8e8e8e 0 1px,transparent 1px 2px)"></div>
<svg class="a" style="left:46px;top:357px" width="9" height="9"><defs><linearGradient id="bxg" x1="0" y1="0" x2="0" y2="1"><stop offset="0" stop-color="#fff"/><stop offset="1" stop-color="#d8d8d8"/></linearGradient></defs><rect x="0.5" y="0.5" width="8" height="8" rx="1" fill="url(#bxg)" stroke="#8e8f8f"/><path d="M2 4.5H7" stroke="#2a3d8f"/><path d="M4.5 2V7" stroke="#2a3d8f"/></svg>
<svg class="a" style="left:62px;top:356px" width="14" height="12"><defs><linearGradient id="fdg" x1="0" y1="0" x2="0" y2="1"><stop offset="0" stop-color="#fff3b0"/><stop offset="0.5" stop-color="#fbe27a"/><stop offset="1" stop-color="#f5d054"/></linearGradient><linearGradient id="fdb" x1="0" y1="0" x2="1" y2="0"><stop offset="0" stop-color="#f4cf5a"/><stop offset="1" stop-color="#fff0b0"/></linearGradient></defs><path d="M0.5 9.8V2.1L1.7 0.8H2.2L2.7 0.4H5.8L6.5 1.4H11L12 2.4V9.8Z" fill="url(#fdb)" stroke="#c9a230"/>
<path d="M1.6 2.1H11" stroke="#fffbe6" stroke-width="0.9"/>
<path d="M2.5 3.3H13.5V9.8L12.8 10.5H1.2L0.6 9.8" fill="url(#fdg)" stroke="#c9a230"/>
<path d="M3.5 4.4H12.6" stroke="#fffbe0" stroke-width="0.9"/>
<path d="M12.3 4.2V9.4" stroke="#f0c040" stroke-width="0.8"/></svg>
<div class="t ms" style="left:81px;top:354.6px;font-size:11px">Cantoneiras</div>
<div class="a" style="left:55px;top:377px;width:7px;height:1px;background:repeating-linear-gradient(90deg,#8e8e8e 0 1px,transparent 1px 2px)"></div>
<svg class="a" style="left:46px;top:373px" width="9" height="9"><defs><linearGradient id="bxg" x1="0" y1="0" x2="0" y2="1"><stop offset="0" stop-color="#fff"/><stop offset="1" stop-color="#d8d8d8"/></linearGradient></defs><rect x="0.5" y="0.5" width="8" height="8" rx="1" fill="url(#bxg)" stroke="#8e8f8f"/><path d="M2 4.5H7" stroke="#2a3d8f"/><path d="M4.5 2V7" stroke="#2a3d8f"/></svg>
<svg class="a" style="left:62px;top:372px" width="14" height="12"><defs><linearGradient id="fdg" x1="0" y1="0" x2="0" y2="1"><stop offset="0" stop-color="#fff3b0"/><stop offset="0.5" stop-color="#fbe27a"/><stop offset="1" stop-color="#f5d054"/></linearGradient><linearGradient id="fdb" x1="0" y1="0" x2="1" y2="0"><stop offset="0" stop-color="#f4cf5a"/><stop offset="1" stop-color="#fff0b0"/></linearGradient></defs><path d="M0.5 9.8V2.1L1.7 0.8H2.2L2.7 0.4H5.8L6.5 1.4H11L12 2.4V9.8Z" fill="url(#fdb)" stroke="#c9a230"/>
<path d="M1.6 2.1H11" stroke="#fffbe6" stroke-width="0.9"/>
<path d="M2.5 3.3H13.5V9.8L12.8 10.5H1.2L0.6 9.8" fill="url(#fdg)" stroke="#c9a230"/>
<path d="M3.5 4.4H12.6" stroke="#fffbe0" stroke-width="0.9"/>
<path d="M12.3 4.2V9.4" stroke="#f0c040" stroke-width="0.8"/></svg>
<div class="t ms" style="left:81px;top:370.6px;font-size:11px">Portas/Frentes</div>
<div class="a" style="left:55px;top:393px;width:7px;height:1px;background:repeating-linear-gradient(90deg,#8e8e8e 0 1px,transparent 1px 2px)"></div>
<svg class="a" style="left:46px;top:389px" width="9" height="9"><defs><linearGradient id="bxg" x1="0" y1="0" x2="0" y2="1"><stop offset="0" stop-color="#fff"/><stop offset="1" stop-color="#d8d8d8"/></linearGradient></defs><rect x="0.5" y="0.5" width="8" height="8" rx="1" fill="url(#bxg)" stroke="#8e8f8f"/><path d="M2 4.5H7" stroke="#2a3d8f"/><path d="M4.5 2V7" stroke="#2a3d8f"/></svg>
<svg class="a" style="left:62px;top:388px" width="14" height="12"><defs><linearGradient id="fdgg" x1="0" y1="0" x2="0" y2="1"><stop offset="0" stop-color="#f4f4f4"/><stop offset="1" stop-color="#cfcfcf"/></linearGradient></defs><path d="M0.5 9.8V2.1L1.7 0.8H2.2L2.7 0.4H5.8L6.5 1.4H11L12 2.4V9.8Z" fill="url(#fdgg)" stroke="#8e8e8e"/>
<path d="M1.6 2.1H11" stroke="#fffbe6" stroke-width="0.9"/>
<path d="M2.5 3.3H13.5V9.8L12.8 10.5H1.2L0.6 9.8" fill="url(#fdgg)" stroke="#8e8e8e"/>
<path d="M3.5 4.4H12.6" stroke="#fffbe0" stroke-width="0.9"/>
<path d="M12.3 4.2V9.4" stroke="#b0b0b0" stroke-width="0.8"/></svg>
<div class="t ms" style="left:81px;top:386.6px;font-size:11px">Caixas</div>
<div class="a" style="left:36px;top:409px;width:7px;height:1px;background:repeating-linear-gradient(90deg,#8e8e8e 0 1px,transparent 1px 2px)"></div>
<svg class="a" style="left:27px;top:405px" width="9" height="9"><defs><linearGradient id="bxg" x1="0" y1="0" x2="0" y2="1"><stop offset="0" stop-color="#fff"/><stop offset="1" stop-color="#d8d8d8"/></linearGradient></defs><rect x="0.5" y="0.5" width="8" height="8" rx="1" fill="url(#bxg)" stroke="#8e8f8f"/><path d="M2 4.5H7" stroke="#2a3d8f"/><path d="M4.5 2V7" stroke="#2a3d8f"/></svg>
<svg class="a" style="left:43px;top:404px" width="14" height="12"><defs><linearGradient id="fdg" x1="0" y1="0" x2="0" y2="1"><stop offset="0" stop-color="#fff3b0"/><stop offset="0.5" stop-color="#fbe27a"/><stop offset="1" stop-color="#f5d054"/></linearGradient><linearGradient id="fdb" x1="0" y1="0" x2="1" y2="0"><stop offset="0" stop-color="#f4cf5a"/><stop offset="1" stop-color="#fff0b0"/></linearGradient></defs><path d="M0.5 9.8V2.1L1.7 0.8H2.2L2.7 0.4H5.8L6.5 1.4H11L12 2.4V9.8Z" fill="url(#fdb)" stroke="#c9a230"/>
<path d="M1.6 2.1H11" stroke="#fffbe6" stroke-width="0.9"/>
<path d="M2.5 3.3H13.5V9.8L12.8 10.5H1.2L0.6 9.8" fill="url(#fdg)" stroke="#c9a230"/>
<path d="M3.5 4.4H12.6" stroke="#fffbe0" stroke-width="0.9"/>
<path d="M12.3 4.2V9.4" stroke="#f0c040" stroke-width="0.8"/></svg>
<div class="t ms" style="left:62px;top:402.6px;font-size:11px">Cozinhas Cava</div>
<div class="a" style="left:36px;top:425px;width:7px;height:1px;background:repeating-linear-gradient(90deg,#8e8e8e 0 1px,transparent 1px 2px)"></div>
<svg class="a" style="left:27px;top:421px" width="9" height="9"><defs><linearGradient id="bxg" x1="0" y1="0" x2="0" y2="1"><stop offset="0" stop-color="#fff"/><stop offset="1" stop-color="#d8d8d8"/></linearGradient></defs><rect x="0.5" y="0.5" width="8" height="8" rx="1" fill="url(#bxg)" stroke="#8e8f8f"/><path d="M2 4.5H7" stroke="#2a3d8f"/><path d="M4.5 2V7" stroke="#2a3d8f"/></svg>
<svg class="a" style="left:43px;top:420px" width="14" height="12"><defs><linearGradient id="fdg" x1="0" y1="0" x2="0" y2="1"><stop offset="0" stop-color="#fff3b0"/><stop offset="0.5" stop-color="#fbe27a"/><stop offset="1" stop-color="#f5d054"/></linearGradient><linearGradient id="fdb" x1="0" y1="0" x2="1" y2="0"><stop offset="0" stop-color="#f4cf5a"/><stop offset="1" stop-color="#fff0b0"/></linearGradient></defs><path d="M0.5 9.8V2.1L1.7 0.8H2.2L2.7 0.4H5.8L6.5 1.4H11L12 2.4V9.8Z" fill="url(#fdb)" stroke="#c9a230"/>
<path d="M1.6 2.1H11" stroke="#fffbe6" stroke-width="0.9"/>
<path d="M2.5 3.3H13.5V9.8L12.8 10.5H1.2L0.6 9.8" fill="url(#fdg)" stroke="#c9a230"/>
<path d="M3.5 4.4H12.6" stroke="#fffbe0" stroke-width="0.9"/>
<path d="M12.3 4.2V9.4" stroke="#f0c040" stroke-width="0.8"/></svg>
<div class="t ms" style="left:62px;top:418.6px;font-size:11px">Cozinhas Cava Madeira</div>
<div class="a" style="left:36px;top:441px;width:7px;height:1px;background:repeating-linear-gradient(90deg,#8e8e8e 0 1px,transparent 1px 2px)"></div>
<svg class="a" style="left:27px;top:437px" width="9" height="9"><defs><linearGradient id="bxg" x1="0" y1="0" x2="0" y2="1"><stop offset="0" stop-color="#fff"/><stop offset="1" stop-color="#d8d8d8"/></linearGradient></defs><rect x="0.5" y="0.5" width="8" height="8" rx="1" fill="url(#bxg)" stroke="#8e8f8f"/><path d="M2 4.5H7" stroke="#2a3d8f"/><path d="M4.5 2V7" stroke="#2a3d8f"/></svg>
<svg class="a" style="left:43px;top:436px" width="14" height="12"><defs><linearGradient id="fdg" x1="0" y1="0" x2="0" y2="1"><stop offset="0" stop-color="#fff3b0"/><stop offset="0.5" stop-color="#fbe27a"/><stop offset="1" stop-color="#f5d054"/></linearGradient><linearGradient id="fdb" x1="0" y1="0" x2="1" y2="0"><stop offset="0" stop-color="#f4cf5a"/><stop offset="1" stop-color="#fff0b0"/></linearGradient></defs><path d="M0.5 9.8V2.1L1.7 0.8H2.2L2.7 0.4H5.8L6.5 1.4H11L12 2.4V9.8Z" fill="url(#fdb)" stroke="#c9a230"/>
<path d="M1.6 2.1H11" stroke="#fffbe6" stroke-width="0.9"/>
<path d="M2.5 3.3H13.5V9.8L12.8 10.5H1.2L0.6 9.8" fill="url(#fdg)" stroke="#c9a230"/>
<path d="M3.5 4.4H12.6" stroke="#fffbe0" stroke-width="0.9"/>
<path d="M12.3 4.2V9.4" stroke="#f0c040" stroke-width="0.8"/></svg>
<div class="t ms" style="left:62px;top:434.6px;font-size:11px">Banheiros</div>
<div class="a" style="left:36px;top:457px;width:7px;height:1px;background:repeating-linear-gradient(90deg,#8e8e8e 0 1px,transparent 1px 2px)"></div>
<svg class="a" style="left:27px;top:453px" width="9" height="9"><defs><linearGradient id="bxg" x1="0" y1="0" x2="0" y2="1"><stop offset="0" stop-color="#fff"/><stop offset="1" stop-color="#d8d8d8"/></linearGradient></defs><rect x="0.5" y="0.5" width="8" height="8" rx="1" fill="url(#bxg)" stroke="#8e8f8f"/><path d="M2 4.5H7" stroke="#2a3d8f"/><path d="M4.5 2V7" stroke="#2a3d8f"/></svg>
<svg class="a" style="left:43px;top:452px" width="14" height="12"><defs><linearGradient id="fdg" x1="0" y1="0" x2="0" y2="1"><stop offset="0" stop-color="#fff3b0"/><stop offset="0.5" stop-color="#fbe27a"/><stop offset="1" stop-color="#f5d054"/></linearGradient><linearGradient id="fdb" x1="0" y1="0" x2="1" y2="0"><stop offset="0" stop-color="#f4cf5a"/><stop offset="1" stop-color="#fff0b0"/></linearGradient></defs><path d="M0.5 9.8V2.1L1.7 0.8H2.2L2.7 0.4H5.8L6.5 1.4H11L12 2.4V9.8Z" fill="url(#fdb)" stroke="#c9a230"/>
<path d="M1.6 2.1H11" stroke="#fffbe6" stroke-width="0.9"/>
<path d="M2.5 3.3H13.5V9.8L12.8 10.5H1.2L0.6 9.8" fill="url(#fdg)" stroke="#c9a230"/>
<path d="M3.5 4.4H12.6" stroke="#fffbe0" stroke-width="0.9"/>
<path d="M12.3 4.2V9.4" stroke="#f0c040" stroke-width="0.8"/></svg>
<div class="t ms" style="left:62px;top:450.6px;font-size:11px">Dormitórios</div>
</div>
<div class="a" style="left:240px;top:93px;width:770px;height:487px;border:1px solid #bdbdbd;border-top:none"></div>
<div class="a" style="left:246px;top:99px;width:146px;height:475px;border:1px solid #858585;border-radius:2px;background:#eef6fd"></div>
<div class="a" style="left:247px;top:100px;width:144px;height:20px;background:#f0f0f0;border-bottom:1px solid #858585"></div>
<div class="t ms" style="right:684.5px;top:104.69px;font-size:11px;color:#000;font-weight:400;font-style:normal;text-align:right;">Itens do Módulo</div>
<svg class="a" style="left:377px;top:106px;" width="8" height="10" viewBox="0 0 8 10"><path d="M1.2 6V1.6Q1.2 0.3 2.5 0.3H5.5Q6.8 0.3 6.8 1.6V6Z" fill="#000"/><path d="M2.6 1.2V5.6" stroke="#fff" stroke-width="0.7" opacity="0.5"/><path d="M0 6.5H8" stroke="#000" stroke-width="1"/><path d="M4 6.5V10" stroke="#000" stroke-width="1.2"/></svg>
<div class="a" style="left:247px;top:124px;width:127px;height:30px;background:#add8e6"></div>
<div class="a" style="left:247px;top:121px;width:127px;height:435px;overflow:hidden">
<div class="t ms" style="left:5px;top:12.69px;font-size:11px;font-weight:400;font-style:normal;color:#000;">Identificação</div>
<div class="t ms" style="left:5px;top:48.69px;font-size:11px;font-weight:700;font-style:normal;color:#000;letter-spacing:-0.35px;-webkit-text-stroke:0.25px #000;">Dimensionamento</div>
<div class="t ms" style="left:5px;top:84.69px;font-size:11px;font-weight:400;font-style:normal;color:#000;">Modelos</div>
<div class="t ms" style="left:5px;top:120.69px;font-size:11px;font-weight:400;font-style:normal;color:#000;">Materiais</div>
<div class="t ms" style="left:5px;top:156.69px;font-size:11px;font-weight:400;font-style:normal;color:#000;">Opções de Remoção</div>
<div class="t ms" style="left:5px;top:192.69px;font-size:11px;font-weight:400;font-style:italic;color:#808080;">Referência</div>
<div class="t ms" style="left:5px;top:228.69px;font-size:11px;font-weight:400;font-style:normal;color:#000;">Abertura</div>
<div class="t ms" style="left:5px;top:264.69px;font-size:11px;font-weight:700;font-style:normal;color:#000;letter-spacing:-0.35px;-webkit-text-stroke:0.25px #000;">Atributos</div>
<div class="t ms" style="left:5px;top:300.69px;font-size:11px;font-weight:400;font-style:italic;color:#808080;">Camadas</div>
<div class="t ms" style="left:5px;top:336.69px;font-size:11px;font-weight:400;font-style:italic;color:#808080;">Orçamento</div>
<div class="t ms" style="left:5px;top:372.69px;font-size:11px;font-weight:400;font-style:normal;color:#000;">Serviço de Posicionamento</div>
<div class="t ms" style="left:5px;top:408.69px;font-size:11px;font-weight:400;font-style:normal;color:#000;">Parâmetros de Inserção</div>
</div>
<div class="a" style="left:374px;top:121px;width:17px;height:435px;background:#f0f0f0"></div>
<div class="a" style="left:374px;top:138px;width:17px;height:269px;background:#cdcdcd"></div>
<svg class="a" style="left:378px;top:127px;" width="9" height="6" viewBox="0 0 9 6"><path d="M0.5 5.5L4.5 1L8.5 5.5" fill="none" stroke="#a3a3a3" stroke-width="1.1"/></svg>
<svg class="a" style="left:378px;top:546px;" width="9" height="6" viewBox="0 0 9 6"><path d="M0.5 0.5L4.5 5L8.5 0.5" fill="none" stroke="#a3a3a3" stroke-width="1.1"/></svg>
<div class="a" style="left:247px;top:556px;width:144px;height:16px;background:#f0f0f0"></div>
<div class="a" style="left:264px;top:556px;width:84px;height:16px;background:#cdcdcd"></div>
<svg class="a" style="left:253px;top:560px;" width="6" height="9" viewBox="0 0 6 9"><path d="M5.5 0.5L1 4.5L5.5 8.5" fill="none" stroke="#a3a3a3" stroke-width="1.1"/></svg>
<svg class="a" style="left:363px;top:560px;" width="6" height="9" viewBox="0 0 6 9"><path d="M0.5 0.5L5 4.5L0.5 8.5" fill="none" stroke="#a3a3a3" stroke-width="1.1"/></svg>
<div class="a" style="left:396px;top:116px;width:608px;height:458px;border:1px solid #858585;border-top:none;border-radius:0 0 2px 2px"></div>
<div class="a" style="left:469px;top:116px;width:535px;height:1px;background:#858585"></div>
<div class="a" style="left:396px;top:99px;width:1px;height:18px;background:#858585"></div>
<div class="a" style="left:398px;top:100px;width:71px;height:19px;background:#f9f9f9"></div>
<div class="a" style="left:469px;top:99px;width:1px;height:18px;background:#858585"></div>
<div class="t ms" style="left:402px;top:102.69px;font-size:11px;color:#000;font-weight:400;font-style:normal;">Identificação</div>
<div class="a" style="left:399px;top:119px;width:602px;height:2px;background:#ececec"></div>
<div class="a" style="left:399px;top:119px;width:2px;height:451px;background:#ececec"></div>
<div class="a" style="left:401px;top:121px;width:598px;height:448px;border:1px solid #858585;background:#fff"></div>
<div class="a" style="left:999px;top:121px;width:1px;height:449px;background:#ececec"></div>
<div class="a" style="left:401px;top:569px;width:599px;height:1px;background:#ececec"></div>
<div class="a" style="left:406px;top:126px;width:87px;height:64px;border:1px solid #5a5a5a;background:#fff"></div>
<svg class="a" style="left:406px;top:126px;" width="87" height="64" viewBox="0 0 87 64"><defs>
<linearGradient id="sideg" x1="0" y1="0" x2="1" y2="0"><stop offset="0" stop-color="#bdbab5"/><stop offset="1" stop-color="#a9a6a0"/></linearGradient>
<linearGradient id="woodg" x1="0" y1="0" x2="1" y2="0"><stop offset="0" stop-color="#7a6956"/><stop offset="0.15" stop-color="#958472"/><stop offset="0.3" stop-color="#82715f"/><stop offset="0.5" stop-color="#9c8b79"/><stop offset="0.65" stop-color="#857463"/><stop offset="0.85" stop-color="#988775"/><stop offset="1" stop-color="#7b6b59"/></linearGradient>
</defs>
<path d="M19 12.5L52.5 2.5L71.5 9L37.5 18Z" fill="#b9b6b1" stroke="#77736e" stroke-width="0.9"/>
<path d="M22.5 12.6L52.3 3.9L68 9.1L38 16.6Z" fill="#dcd9d5"/>
<path d="M26 12.8L52 5.6L64.5 9.4L38.5 15.8Z" fill="#eeece9"/>
<path d="M19 12.5L37.5 18V62.5L19 57.5Z" fill="url(#sideg)" stroke="#85817c" stroke-width="0.7"/>
<path d="M37.5 18L49.5 15.5V60.5L37.5 62.5Z" fill="#d6d4d0" stroke="#96938e" stroke-width="0.6"/>
<path d="M46.8 16V61" stroke="#f2f1ef" stroke-width="1.3"/>
<path d="M49.5 15.5L71.5 9V53.5L49.5 60.5Z" fill="url(#woodg)" stroke="#6a5a4a" stroke-width="0.7"/>
<g stroke="#6e5e4e" stroke-width="0.4" opacity="0.55"><path d="M53 14.5V59.5M57.5 13.2V58.2M61 12.2V57.2M66 10.7V55.5M69 9.8V54.4"/></g></svg>
<div class="a" style="left:406px;top:193px;width:86px;height:22px;border:1px solid #a6a6ad;background:#e3e3e3"></div>
<div class="t" style="left:410.5px;top:198.77px;font-size:11.85px;color:#000;font-weight:400;font-style:normal;">RetoE_3.png</div>
<div class="a" style="left:446px;top:218px;width:22px;height:22px;border:1px solid #d5d5d5;border-radius:3px;background:#fff"></div>
<div class="a" style="left:470px;top:218px;width:22px;height:22px;border:1px solid #d5d5d5;border-radius:3px;background:#fff"></div>
<svg class="a" style="left:449px;top:222px;" width="15" height="13" viewBox="0 0 15 13"><defs><linearGradient id="bng" x1="0" y1="0" x2="1" y2="0"><stop offset="0" stop-color="#f4f8ff"/><stop offset="0.5" stop-color="#9ab8ea"/><stop offset="1" stop-color="#3a62c0"/></linearGradient></defs>
<g stroke="#1a3a8c" stroke-width="1" stroke-linejoin="round" fill="url(#bng)">
<path d="M2.5 0.5H4.5V2.5H5.5V4.5L6.5 6V12.5H0.5V6L1.5 4.5V2.5H2.5Z"/>
<path d="M10.5 0.5H12.5V2.5H13.5V4.5L14.5 6V12.5H8.5V6L9.5 4.5V2.5H10.5Z"/>
</g>
<path d="M6.5 6.5H8.5V8H6.5Z" fill="#1a3a8c"/>
<path d="M1.5 6.6H5.5M9.5 6.6H13.5" stroke="#1a3a8c" stroke-width="0.9"/>
<path d="M1.2 7.5H2.8V11.8H1.2ZM9.2 7.5H10.8V11.8H9.2Z" fill="#fff"/></svg>
<svg class="a" style="left:470px;top:218px;" width="22" height="22" viewBox="0 0 22 22"><defs><linearGradient id="erg" x1="0" y1="0" x2="0" y2="1"><stop offset="0" stop-color="#fafafa"/><stop offset="1" stop-color="#cfcfcf"/></linearGradient>
<linearGradient id="erp" x1="0" y1="0" x2="0" y2="1"><stop offset="0" stop-color="#f8a8b8"/><stop offset="1" stop-color="#e0607a"/></linearGradient></defs>
<ellipse cx="11" cy="16.8" rx="6" ry="1.4" fill="#000" opacity="0.06"/>
<g transform="rotate(-42 11.3 10.6)">
<rect x="3.5" y="7.3" width="15.6" height="6.6" rx="2" fill="url(#erg)" stroke="#c2c2c2" stroke-width="0.7"/>
<path d="M12.6 7.3H17.1A2 2 0 0 1 19.1 9.3V11.9A2 2 0 0 1 17.1 13.9H12.6Z" fill="url(#erp)"/>
</g></svg>
<div class="t ms" style="right:441.5px;top:127.69px;font-size:11px;color:#000;font-weight:400;font-style:normal;text-align:right;">Revisado</div>
<div class="t ms" style="right:441.5px;top:152.69px;font-size:11px;color:#000;font-weight:400;font-style:normal;text-align:right;">ID</div>
<div class="t ms" style="right:441.5px;top:180.69px;font-size:11px;color:#000;font-weight:400;font-style:normal;text-align:right;">Arquivo</div>
<div class="t ms" style="right:442px;top:208.69px;font-size:11px;color:#000;font-weight:400;font-style:normal;text-align:right;">Abreviatura</div>
<div class="t ms" style="right:441.5px;top:236.69px;font-size:11px;color:#000;font-weight:400;font-style:normal;text-align:right;">Descrição</div>
<div class="t ms" style="right:441.5px;top:264.69px;font-size:11px;color:#000;font-weight:400;font-style:normal;text-align:right;">Tipo do Item 2</div>
<div class="t ms" style="right:441px;top:292.69px;font-size:11px;color:#000;font-weight:400;font-style:normal;text-align:right;">Tipo</div>
<div class="t ms" style="right:441px;top:317.69px;font-size:11px;color:#000;font-weight:400;font-style:normal;text-align:right;">Invisível</div>
<div class="t ms" style="right:441px;top:340.69px;font-size:11px;color:#000;font-weight:400;font-style:normal;text-align:right;">Modelo invisível</div>
<div class="t ms" style="right:444px;top:363.69px;font-size:11px;color:#000;font-weight:400;font-style:normal;text-align:right;">Validar dimensão alterada</div>
<div class="t ms" style="right:445px;top:386.69px;font-size:11px;color:#000;font-weight:400;font-style:normal;text-align:right;">Permite espelhamento</div>
<div class="a" style="left:583px;top:149px;width:387px;height:22px;border:1px solid #a5a8b0;background:#fff"></div>
<div class="t" style="left:587px;top:153.54px;font-size:12px;color:#000;font-weight:400;font-style:normal;">COZ_INF_CAN_CR</div>
<div class="a" style="left:583px;top:177px;width:411px;height:22px;border:1px solid #a5a8b0;background:#fff"></div>
<div class="t" style="left:587px;top:181.54px;font-size:12px;color:#000;font-weight:400;font-style:normal;">CR_ESQ</div>
<div class="a" style="left:583px;top:205px;width:339px;height:22px;border:1px solid #a5a8b0;background:#fff"></div>
<div class="t" style="left:587px;top:209.54px;font-size:12px;color:#000;font-weight:400;font-style:normal;">$W$ CR Esq ($TEXT$)</div>
<div class="a" style="left:583px;top:233px;width:339px;height:22px;border:1px solid #a5a8b0;background:#fff"></div>
<div class="t" style="left:587px;top:237.54px;font-size:12px;color:#000;font-weight:400;font-style:normal;">Balcão Canto Reto Esquerdo</div>
<div class="a" style="left:583px;top:261px;width:411px;height:22px;border:1px solid #a5a8b0;background:#fff"></div>
<div class="a" style="left:583px;top:289px;width:411px;height:21px;border:1px solid #d0d0d0;border-radius:2px;background:#fdfdfd"></div>
<div class="t ms" style="left:587.4px;top:294.69px;font-size:11px;color:#000;font-weight:400;font-style:normal;letter-spacing:-0.4px">Módulo</div>
<svg class="a" style="left:982px;top:297px;" width="10" height="6" viewBox="0 0 10 6"><path d="M0.5 0.5L5 5L9.5 0.5" fill="none" stroke="#606060" stroke-width="1.05"/></svg>
<div class="a" style="left:583px;top:126px;width:32px;height:14px;border-radius:7px;background:#c1c1c9"></div>
<div class="a" style="left:583px;top:126px;width:14px;height:14px;border-radius:7px;background:#e6e6e6;border:1px solid #676767"></div>
<div class="a" style="left:583px;top:316px;width:32px;height:14px;border-radius:7px;background:#c1c1c9"></div>
<div class="a" style="left:583px;top:316px;width:14px;height:14px;border-radius:7px;background:#e6e6e6;border:1px solid #676767"></div>
<div class="a" style="left:583px;top:339px;width:32px;height:14px;border-radius:7px;background:#c1c1c9"></div>
<div class="a" style="left:583px;top:339px;width:14px;height:14px;border-radius:7px;background:#e6e6e6;border:1px solid #676767"></div>
<div class="a" style="left:583px;top:362px;width:32px;height:14px;border-radius:7px;background:#a9c9e9"></div>
<div class="a" style="left:601px;top:362px;width:14px;height:14px;border-radius:7px;background:#3a7bc0"></div>
<div class="a" style="left:583px;top:386px;width:13px;height:13px;border-radius:2px;background:#0f62c4"></div>
<div class="a" style="left:587px;top:392px;width:5px;height:1px;background:#fff"></div>
<div class="a" style="left:971px;top:150px;width:22px;height:20px;border:1px solid #d8d8d8;border-radius:3px;background:#fff"></div>
<svg class="a" style="left:974px;top:152.5px;" width="17" height="16" viewBox="0 0 17 16"><g stroke="#1e6ef0" stroke-width="1.25" fill="none" stroke-linecap="round" stroke-linejoin="round">
<path d="M2.6 0.9L0.8 2.2L3.6 5"/><path d="M12.6 0.9L14.2 2.2L11.6 4.6"/>
<path d="M7.8 10.8L5.9 13L6.9 14.3"/><path d="M13.5 10.8L15.8 13L14.6 14.3"/>
</g>
<path d="M3.6 5.6V13H5.8" stroke="#1a9ae0" stroke-width="1.2" fill="none" stroke-dasharray="1.1 0.9"/>
<text x="10.6" y="12.6" font-family="Liberation Sans" font-weight="700" font-size="9.6" fill="#7a3c10" text-anchor="middle">?</text></svg>
<div class="a" style="left:923px;top:206px;width:22px;height:20px;border:1px solid #d8d8d8;border-radius:3px;background:#fff"></div>
<svg class="a" style="left:925px;top:208px;" width="18" height="16" viewBox="0 0 18 16"><path d="M1.3 9.6L3.2 8.4L6.3 14.3L10 2.3H17" fill="none" stroke="#000" stroke-width="1.9" stroke-linejoin="miter"/><path d="M10.6 8.2H17.6L16.2 14.6H9.2Z" fill="#ffc000"/><text x="13.3" y="14.2" font-family="Liberation Sans" font-weight="700" font-style="italic" font-size="9" fill="#000" text-anchor="middle">a</text></svg>
<div class="a" style="left:947px;top:206px;width:22px;height:20px;border:1px solid #d8d8d8;border-radius:3px;background:#fff"></div>
<svg class="a" style="left:954px;top:211.5px;" width="9" height="9" viewBox="0 0 9 9"><path d="M0.4 0.8H8.2V2.2M8.2 7.8V6.4M8.4 7.8H0.6L4.3 4.3L0.6 0.8" fill="none" stroke="#222" stroke-width="1.5" stroke-linejoin="miter"/></svg>
<div class="a" style="left:971px;top:206px;width:22px;height:20px;border:1px solid #7a7a7a;background:#e6e6e6"></div>
<svg class="a" style="left:973.5px;top:208px;" width="20" height="18" viewBox="0 0 20 18"><defs><linearGradient id="chg" x1="0" y1="0" x2="0" y2="1"><stop offset="0" stop-color="#ffc9a0"/><stop offset="0.55" stop-color="#ffd020"/><stop offset="1" stop-color="#ffc000"/></linearGradient></defs><path d="M7 1.6C3.6 1.6 1.2 3.8 1.2 6.6C1.2 8.8 2.8 10.6 5.4 11.3L4.8 14.6L8.6 11.6C12.4 11.6 15.2 9.4 15.2 6.6C15.2 3.8 12.4 1.6 8.2 1.6Z" transform="translate(0.6 0)" fill="url(#chg)" stroke="#d86a10" stroke-width="0.9" stroke-dasharray="1 0.7"/><path d="M3.6 5.2V6.8H5M5.6 5.2V6.8H7" stroke="#a08848" stroke-width="0.8" fill="none"/><path d="M10.4 5.2H11.6V6.8M12.4 5.2H13.6V6.8" stroke="#e85a10" stroke-width="1" fill="none"/></svg>
<div class="a" style="left:923px;top:234px;width:22px;height:20px;border:1px solid #d8d8d8;border-radius:3px;background:#fff"></div>
<svg class="a" style="left:925px;top:236px;" width="18" height="16" viewBox="0 0 18 16"><path d="M1.3 9.6L3.2 8.4L6.3 14.3L10 2.3H17" fill="none" stroke="#000" stroke-width="1.9" stroke-linejoin="miter"/><path d="M10.6 8.2H17.6L16.2 14.6H9.2Z" fill="#ffc000"/><text x="13.3" y="14.2" font-family="Liberation Sans" font-weight="700" font-style="italic" font-size="9" fill="#000" text-anchor="middle">a</text></svg>
<div class="a" style="left:947px;top:234px;width:22px;height:20px;border:1px solid #d8d8d8;border-radius:3px;background:#fff"></div>
<svg class="a" style="left:954px;top:239.5px;" width="9" height="9" viewBox="0 0 9 9"><path d="M0.4 0.8H8.2V2.2M8.2 7.8V6.4M8.4 7.8H0.6L4.3 4.3L0.6 0.8" fill="none" stroke="#222" stroke-width="1.5" stroke-linejoin="miter"/></svg>
<div class="a" style="left:971px;top:234px;width:22px;height:20px;border:1px solid #7a7a7a;background:#e6e6e6"></div>
<svg class="a" style="left:973.5px;top:236px;" width="20" height="18" viewBox="0 0 20 18"><defs><linearGradient id="chg" x1="0" y1="0" x2="0" y2="1"><stop offset="0" stop-color="#ffc9a0"/><stop offset="0.55" stop-color="#ffd020"/><stop offset="1" stop-color="#ffc000"/></linearGradient></defs><path d="M7 1.6C3.6 1.6 1.2 3.8 1.2 6.6C1.2 8.8 2.8 10.6 5.4 11.3L4.8 14.6L8.6 11.6C12.4 11.6 15.2 9.4 15.2 6.6C15.2 3.8 12.4 1.6 8.2 1.6Z" transform="translate(0.6 0)" fill="url(#chg)" stroke="#d86a10" stroke-width="0.9" stroke-dasharray="1 0.7"/><path d="M3.6 5.2V6.8H5M5.6 5.2V6.8H7" stroke="#a08848" stroke-width="0.8" fill="none"/><path d="M10.4 5.2H11.6V6.8M12.4 5.2H13.6V6.8" stroke="#e85a10" stroke-width="1" fill="none"/></svg>
<div class="a" style="left:82px;top:93px;width:234px;height:69px;border:1px solid #979797;background:#fcfcfc;box-shadow:2px 2px 3px rgba(0,0,0,0.28)"></div>
<div class="a" style="left:83px;top:95px;width:24px;height:21px;background:#f0f0f0"></div>
<div class="a" style="left:83px;top:139px;width:24px;height:22px;background:#f0f0f0"></div>
<div class="a" style="left:84px;top:117px;width:230px;height:22px;border:1px solid #0078d7;background:#b8d8f4"></div>
<div class="a" style="left:82px;top:93px;width:32px;height:1px;background:#fcfcfc"></div>
<svg class="a" style="left:87px;top:99px;" width="16" height="14" viewBox="0 0 16 14"><path d="M0.5 0.5H6L8.5 3V10.5H0.5Z" fill="#fff" stroke="#7b93c4"/>
<path d="M0.5 10.5H8.5" stroke="#1d2a55"/>
<path d="M2 3.5H5M2 5.5H6.5M2 7.5H6.5" stroke="#5a96e0"/>
<path d="M6.5 3.5H12L15 6.5V13.5H6.5Z" fill="#fff" stroke="#1a46b0"/>
<path d="M12 3.5V6.5H15" fill="#7ea6f0" stroke="#1a46b0" stroke-width="0.8"/>
<path d="M8 6.5H11M8 8.5H13.5M8 10.5H13.5" stroke="#3a7ae0"/>
<path d="M6.5 13.5H15" stroke="#0e2a8a"/></svg>
<svg class="a" style="left:88px;top:120px;" width="12" height="16" viewBox="0 0 12 16"><g stroke="#3a3f4a" stroke-width="1.3" stroke-linecap="round"><path d="M2.2 1.2L8 9.5M9.3 1.2L3.5 9.5"/></g>
<g fill="#2f5cc8" stroke="#2a2f3a" stroke-width="0.9"><ellipse cx="3.3" cy="12" rx="2.1" ry="2.9"/><ellipse cx="8.5" cy="12" rx="2.1" ry="2.9"/></g>
<g fill="#dfe8f8"><ellipse cx="3.3" cy="12.2" rx="0.9" ry="1.5"/><ellipse cx="8.5" cy="12.2" rx="0.9" ry="1.5"/></g></svg>
<svg class="a" style="left:88px;top:143px;" width="16" height="16" viewBox="0 0 16 16"><defs><linearGradient id="dupg" x1="0" y1="0" x2="1" y2="1"><stop offset="0.45" stop-color="#fff"/><stop offset="1" stop-color="#b8c4dc"/></linearGradient></defs>
<path d="M0.5 13.5V0.5H7.5L9.5 2.5" fill="#fff" stroke="#9aa8c8"/>
<path d="M0.5 13.5H4.5" stroke="#1a2440"/>
<path d="M4.5 14.5V3.5H11.5L14.5 6.5V14.5Z" fill="url(#dupg)" stroke="#1a2440"/>
<path d="M4.5 14.5V3.5H11.5" fill="none" stroke="#a4b2d0"/>
<path d="M11.5 3.5V6.5H14.5" fill="#fff" stroke="#1a2440" stroke-width="0.9"/></svg>
<div class="t" style="left:118px;top:100.84px;font-size:12px;color:#000;font-weight:400;font-style:normal;">Copiar (Ctrl+C)</div>
<div class="t" style="left:118px;top:122.44px;font-size:12px;color:#000;font-weight:400;font-style:normal;">Recortar (Ctrl+X)</div>
<div class="t" style="left:118px;top:144.04px;font-size:12px;color:#000;font-weight:400;font-style:normal;">Duplicar (Ctrl+D)</div>
<div class="a" style="left:257px;top:153px;width:102px;height:20px;border:1px solid #c9c9c9;border-radius:3px;background:#fcfcfc;box-shadow:2px 2px 2px rgba(0,0,0,0.18)"></div>
<div class="t" style="left:263.5px;top:157.18px;font-size:11.6px;color:#4e4e4e;font-weight:400;font-style:normal;">Recortar (Ctrl+X)</div>
<svg class="a" style="left:0px;top:100px;" width="100" height="50" viewBox="0 0 100 50"><g fill="none" stroke="#ff0000" stroke-width="6.5" stroke-linecap="round" stroke-linejoin="round"><path d="M12.5 26.6Q50 26.2 82 27"/><path d="M55 13.2Q69 22.5 84.2 27Q69 32 56.5 41.6"/></g></svg>
</body></html>
